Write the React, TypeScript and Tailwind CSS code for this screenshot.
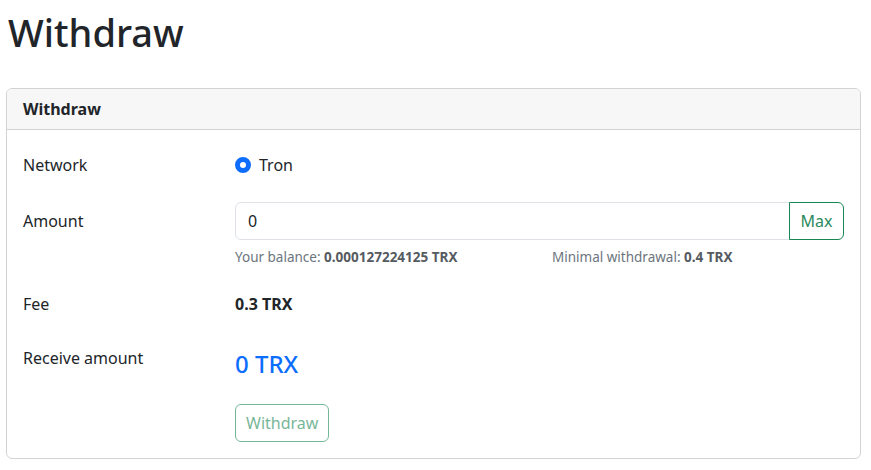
import React from "react";

export default function App() {
  return (
    <div
      className="w-[871px] h-[470px] bg-white text-[#212529] text-[16px] leading-6 overflow-hidden"
      style={{ fontFamily: '"Noto Sans", "Open Sans", sans-serif' }}
    >
      <div className="px-[6px]">
        <h1 className="pl-[2px] pt-[8px] text-[38px] leading-[48px] font-medium">Withdraw</h1>
        <div className="w-[855px] mt-[32px] border border-[#d3d3d3] rounded-[6px] overflow-hidden">
          <div className="h-[41px] px-[16px] flex items-center bg-[#f7f7f7] border-b border-[#d3d3d3] font-bold">
            Withdraw
          </div>
          <div className="px-[16px] pt-[16px] pb-[16px]">
            <div className="flex h-[38px] items-center">
              <div className="w-[212px]">Network</div>
              <label className="flex items-center gap-[8px]">
                <span className="w-[16px] h-[16px] rounded-full border-[5px] border-[#0d6efd] bg-white" />
                <span>Tron</span>
              </label>
            </div>
            <div className="flex h-[38px] items-center mt-[18px]">
              <div className="w-[212px]">Amount</div>
              <div className="flex flex-1 h-[38px]">
                <div className="flex-1 border border-[#dee2e6] rounded-l-[6px] px-[12px] flex items-center">0</div>
                <button className="w-[55px] border border-[#198754] rounded-r-[6px] text-[#2a8a5c] -ml-px">Max</button>
              </div>
            </div>
            <div className="flex mt-[7px] text-[13.5px] leading-[20px] text-[#6c757d]">
              <div className="w-[212px]" />
              <div className="w-[317px]">
                Your balance: <b className="text-[#555b61]">0.000127224125 TRX</b>
              </div>
              <div>
                Minimal withdrawal: <b className="text-[#555b61]">0.4 TRX</b>
              </div>
            </div>
            <div className="flex mt-[25px] h-[24px] items-center">
              <div className="w-[212px]">Fee</div>
              <div className="font-bold">0.3 TRX</div>
            </div>
            <div className="flex mt-[30px] items-start">
              <div className="w-[212px]">Receive amount</div>
              <div className="text-[#0d6efd] text-[24px] leading-[36px] font-medium">0 TRX</div>
            </div>
            <div className="flex mt-[22px]">
              <div className="w-[212px]" />
              <button
                disabled
                className="h-[38px] px-[10px] border border-[#198754] rounded-[6px] text-[#198754] opacity-60"
              >
                Withdraw
              </button>
            </div>
          </div>
        </div>
      </div>
    </div>
  );
}
